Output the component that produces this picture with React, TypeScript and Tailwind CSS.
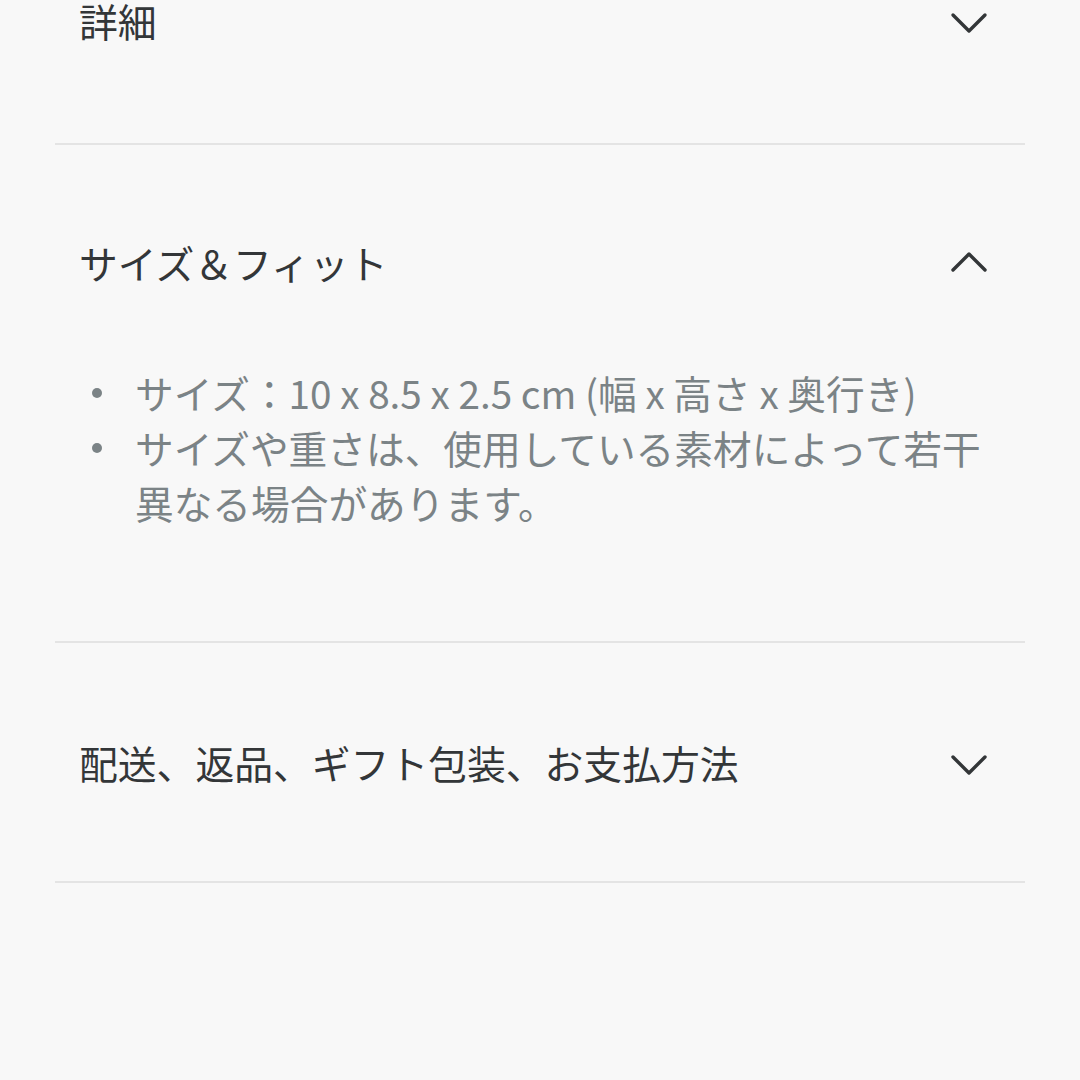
const font = { fontFamily: '"Noto Sans CJK JP", "Noto Sans", sans-serif' };

const Chevron = ({ up }: { up?: boolean }) => (
  <svg
    width="38"
    height="22"
    viewBox="0 0 38 22"
    fill="none"
    className={up ? "shrink-0" : "shrink-0 mt-[5px]"}
  >
    <path
      d={up ? "M3 19 L19 3 L35 19" : "M3 3 L19 19 L35 3"}
      stroke="#333638"
      strokeWidth="3.4"
      strokeLinecap="round"
      strokeLinejoin="round"
    />
  </svg>
);

const Header = ({ title, open }: { title: string; open?: boolean }) => (
  <div className="flex items-center justify-between pl-6 pr-[37px]">
    <span className="text-[38.8px] leading-[56px] text-[#333638]">{title}</span>
    <Chevron up={open} />
  </div>
);

const Bullet = () => (
  <span className="w-[48px] shrink-0 flex items-center h-[55px]">
    <span className="ml-[5px] w-[10px] h-[10px] rounded-full bg-[#7b8386]" />
  </span>
);

export default function App() {
  return (
    <div className="min-h-[1080px] bg-[#f8f8f8] overflow-hidden" style={font}>
      <div className="mx-[55px] -mt-[98px]">
        <section className="border-b-2 border-[#e4e4e4] pt-[90px] pb-[95px]">
          <Header title="詳細" />
        </section>

        <section className="border-b-2 border-[#e4e4e4] pt-[89px] pb-[111px]">
          <Header title="サイズ＆フィット" open />
          <ul className="mt-[75px] pl-[32px] pr-6 text-[38.7px] leading-[55px] text-[#7b8386]">
            <li className="flex">
              <Bullet />
              <span>サイズ：10 x 8.5 x 2.5 cm (幅 x 高さ x 奥行き)</span>
            </li>
            <li className="flex">
              <Bullet />
              <span>サイズや重さは、使用している素材によって若干異なる場合があります。</span>
            </li>
          </ul>
        </section>

        <section className="border-b-2 border-[#e4e4e4] pt-[91px] pb-[91px]">
          <Header title="配送、返品、ギフト包装、お支払方法" />
        </section>
      </div>
    </div>
  );
}
